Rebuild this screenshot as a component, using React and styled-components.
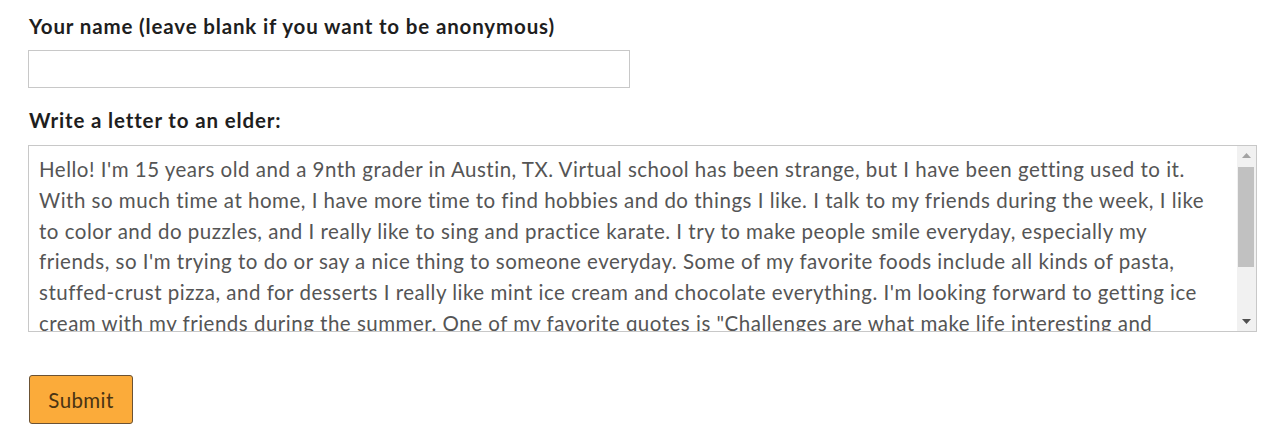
import React from "react";
import styled, { createGlobalStyle } from "styled-components";

const Global = createGlobalStyle`
  html, body { margin: 0; padding: 0; background: #fff; }
  body { font-family: "Lato", "Open Sans", sans-serif; }
`;

const Form = styled.form`
  display: flex;
  flex-direction: column;
  padding: 13px 23px 0 28px;
`;

const Label = styled.label`
  display: block;
  font-family: "Lato", sans-serif;
  font-weight: 700;
  font-size: 20.5px;
  letter-spacing: 0.85px;
  line-height: 26px;
  color: #1e1e1e;
  margin: 0 0 ${(p) => p.$gap}px 1px;
`;

const TextInput = styled.input`
  box-sizing: border-box;
  width: 602px;
  height: 38px;
  border: 1px solid #c8c8c8;
  border-radius: 0;
  margin: 0 0 19px 0;
  padding: 0 10px;
  font-family: "Lato", sans-serif;
  font-size: 19px;
  outline: none;
`;

const LetterBox = styled.div`
  box-sizing: border-box;
  display: flex;
  width: 1229px;
  height: 187px;
  border: 1px solid #c8c8c8;
  margin: 0 0 43px 0;
`;

const Letter = styled.textarea`
  box-sizing: border-box;
  flex: 1;
  min-width: 0;
  height: 100%;
  border: none;
  padding: 8px 20px 12px 10px;
  margin: 0;
  font-family: "Lato", sans-serif;
  font-size: 20.5px;
  line-height: 30.8px;
  letter-spacing: 0.5px;
  color: #555;
  resize: none;
  outline: none;
  overflow-y: scroll;
  scrollbar-width: none;
  &::-webkit-scrollbar { display: none; }
`;

const ScrollRail = styled.div`
  display: flex;
  flex-direction: column;
  width: 19px;
  background: #f1f1f1;
`;

const ScrollArrow = styled.div`
  height: 19px;
  display: flex;
  align-items: center;
  justify-content: center;
  color: ${(p) => (p.$disabled ? "#a3a3a3" : "#505050")};
`;

const ScrollTrack = styled.div`
  flex: 1;
  padding: 2px 2px 0 1px;
`;

const ScrollThumb = styled.div`
  height: 100px;
  background: #c1c1c1;
`;

const Triangle = ({ dir }) => (
  <svg width="9" height="5" viewBox="0 0 9 5" aria-hidden="true">
    {dir === "up" ? (
      <path d="M0 5 L4.5 0 L9 5 Z" fill="currentColor" />
    ) : (
      <path d="M0 0 L4.5 5 L9 0 Z" fill="currentColor" />
    )}
  </svg>
);

const Submit = styled.button`
  align-self: flex-start;
  margin-left: 1px;
  width: 104px;
  height: 49px;
  background: #fbab3a;
  border: 1px solid #6b5234;
  border-radius: 3px;
  font-family: "Lato", sans-serif;
  font-size: 20.5px;
  letter-spacing: 0.4px;
  color: #4a3413;
  cursor: pointer;
`;

const letter =
  "Hello! I'm 15 years old and a 9nth grader in Austin, TX. Virtual school has been strange, but I have been getting used to it. With so much time at home, I have more time to find hobbies and do things I like. I talk to my friends during the week, I like to color and do puzzles, and I really like to sing and practice karate. I try to make people smile everyday, especially my friends, so I'm trying to do or say a nice thing to someone everyday. Some of my favorite foods include all kinds of pasta, stuffed-crust pizza, and for desserts I really like mint ice cream and chocolate everything. I'm looking forward to getting ice cream with my friends during the summer. One of my favorite quotes is \"Challenges are what make life interesting and overcoming them is what makes life meaningful.\" - Joshua J. Marine. I hope you are doing well and staying safe!";

export default function App() {
  return (
    <>
      <Global />
      <Form onSubmit={(e) => e.preventDefault()}>
        <Label htmlFor="name" $gap={11}>Your name (leave blank if you want to be anonymous)</Label>
        <TextInput id="name" type="text" />
        <Label htmlFor="letter" $gap={12}>Write a letter to an elder:</Label>
        <LetterBox>
          <Letter id="letter" defaultValue={letter} />
          <ScrollRail aria-hidden="true">
            <ScrollArrow $disabled><Triangle dir="up" /></ScrollArrow>
            <ScrollTrack><ScrollThumb /></ScrollTrack>
            <ScrollArrow><Triangle dir="down" /></ScrollArrow>
          </ScrollRail>
        </LetterBox>
        <Submit type="submit">Submit</Submit>
      </Form>
    </>
  );
}
